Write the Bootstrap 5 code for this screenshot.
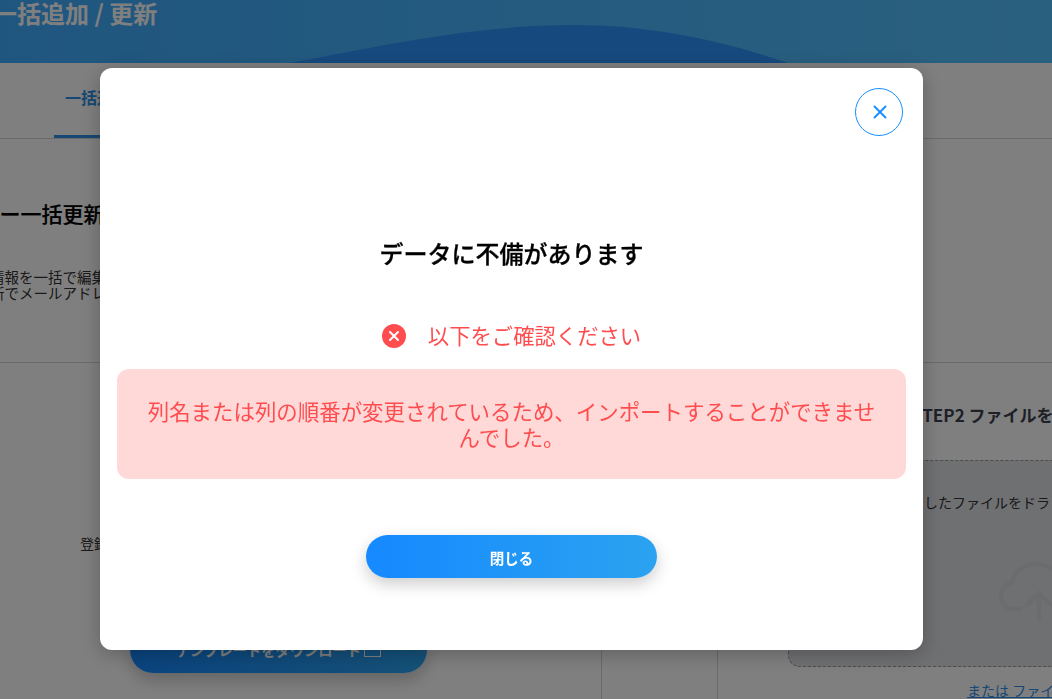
<!DOCTYPE html>
<html lang="ja">
<head>
<meta charset="utf-8">
<title>一括追加 / 更新</title>
<link href="https://cdn.jsdelivr.net/npm/bootstrap@5.3.0/dist/css/bootstrap.min.css" rel="stylesheet">
<style>
html,body{height:699px;overflow:hidden;}
body{font-family:"Noto Sans CJK JP","Noto Sans",sans-serif;background:#fff;color:#333;}
.page-head{height:63px;background:linear-gradient(90deg,#3facff,#55c0ff);overflow:hidden;position:relative;}
.page-head h1{font-size:24px;font-weight:700;color:#fff;margin:-4px 0 0 -31px;line-height:34px;white-space:nowrap;}
.head-wave{position:absolute;left:0;top:0;width:1052px;height:63px;}
.tab-row{height:76px;border-bottom:1px solid #d6d6d6;padding-left:54px;}
.tab-on{width:120px;height:75px;border-bottom:3px solid #2f8fe8;color:#2f8fe8;font-weight:700;font-size:16px;padding:22px 0 0 11px;white-space:nowrap;}
.intro{height:224px;border-bottom:1px solid #d6d6d6;overflow:hidden;padding-top:59px;}
.intro h2{font-size:21px;font-weight:500;-webkit-text-stroke:.2px #000;color:#000;margin:0 0 41px -63px;line-height:30px;white-space:nowrap;}
.intro p{font-size:14.5px;line-height:16px;color:#333;margin:0 0 0 -10px;white-space:nowrap;}
.steps{height:337px;}
.step-one{flex:none;width:602px;border-right:1px solid #d6d6d6;padding:170px 0 0 80px;font-size:14px;}
.step-mid{flex:none;width:116px;border-right:1px solid #d6d6d6;}
.step-two{flex:1 1 0;min-width:0;padding:40px 0 0 70px;white-space:nowrap;overflow:hidden;}
.step-two h3{font-size:17px;font-weight:700;margin:0 0 33px 124px;line-height:24px;color:#3d4250;}
.tpl-btn{width:297px;height:46px;margin:73px 0 0 50px;border:0;border-radius:23px;background:linear-gradient(90deg,#1589ff,#2ba3f0);color:#fff;font-weight:700;font-size:14.3px;box-shadow:0 8px 16px rgba(0,0,0,.2);}
.tpl-btn svg{margin-left:3px;vertical-align:-1px;}
.drop-box{width:400px;height:207px;border:1px dashed #999;border-radius:12px;background:#dfe0e5;padding-top:29px;font-size:14px;color:#333;position:relative;}
.drop-text{margin-left:135px;line-height:24px;}
.cloud{position:absolute;left:209px;top:100px;width:78px;height:60px;}
.or-link{font-size:14px;line-height:20px;margin:13px 0 0 179px;color:#2f8fe8;text-decoration:underline;display:block;}
.err-dialog{max-width:823px;width:823px;margin:68px 0 0 100px;}
.err-content{height:582px;border:0;border-radius:12px;box-shadow:0 4px 20px rgba(0,0,0,.25);padding:168px 17px 0;position:relative;}
.err-close{position:absolute;top:20px;right:20px;width:48px;height:48px;border-radius:50%;border:1px solid #1890ff;background:#fff;padding:0 0 0 1px;display:flex;align-items:center;justify-content:center;}
.err-title{font-size:24px;font-weight:500;-webkit-text-stroke:.3px #000;color:#000;line-height:34px;margin:0;}
.err-line{margin-top:48px;height:36px;color:#ff4d4f;font-size:21.33px;gap:22px;}
.err-line span{margin-top:-2px;}
.err-box{margin-top:15px;height:110px;background:#ffd8d8;border-radius:12px;color:#ff4d4f;font-size:21.45px;line-height:26px;padding:0 28px;}
.err-btn{display:block;width:291px;height:43px;margin:56px auto 0;padding-top:3px;border:0;border-radius:22px;background:linear-gradient(90deg,#1589ff,#2ba3f0);color:#fff;font-size:14.5px;font-weight:700;box-shadow:0 6px 16px rgba(0,0,0,.2);}
</style>
</head>
<body>
<header class="page-head">
  <svg class="head-wave" viewBox="0 0 1052 63" aria-hidden="true"><path d="M290 63C400 42 480 25 575 25C650 25 720 40 788 63Z" fill="#2c93fb"/></svg>
  <h1 class="position-relative">ー一括追加 / 更新</h1>
</header>
<div class="tab-row d-flex"><div class="tab-on">一括追加</div></div>
<section class="intro">
  <h2>ユーザー一括更新</h2>
  <p>情報を一括で編集</p>
  <p>新でメールアドレス</p>
</section>
<section class="steps d-flex">
  <div class="step-one">
    <div>登録</div>
    <button class="tpl-btn" type="button">テンプレートをダウンロード<svg width="17" height="12" viewBox="0 0 17 12" fill="none" stroke="#fff"><rect x=".5" y=".5" width="16" height="11"/></svg></button>
  </div>
  <div class="step-mid"></div>
  <div class="step-two">
    <h3>STEP2 ファイルを選択</h3>
    <div class="drop-box">
      <div class="drop-text">したファイルをドラッグ</div>
      <svg class="cloud" viewBox="0 0 78 60" fill="none" stroke="#d8d9dc" stroke-width="4.5" stroke-linecap="round" stroke-linejoin="round"><path d="M22 48H16C8 48 3 42 3 35C3 28 8 23 14 22C16 10 26 3 38 3C50 3 60 10 64 20"/><path d="M41 58V32M29 44L41 32L53 44"/></svg>
    </div>
    <a class="or-link" href="#">または ファイルを選択</a>
  </div>
</section>

<div class="modal-backdrop show"></div>
<div class="modal d-block" tabindex="-1">
  <div class="modal-dialog err-dialog">
    <div class="modal-content err-content text-center">
      <button class="err-close" type="button" aria-label="閉じる">
        <svg width="16" height="16" viewBox="0 0 16 16" fill="none" stroke="#1890ff" stroke-width="2" stroke-linecap="round"><path d="M2.5 2.5L13.5 13.5M13.5 2.5L2.5 13.5"/></svg>
      </button>
      <h2 class="err-title">データに不備があります</h2>
      <div class="err-line d-flex align-items-center justify-content-center">
        <svg width="24" height="24" viewBox="0 0 24 24"><circle cx="12" cy="12" r="12" fill="#ff4d4f"/><path d="M8 8L16 16M16 8L8 16" stroke="#fff" stroke-width="2" stroke-linecap="round"/></svg>
        <span>以下をご確認ください</span>
      </div>
      <div class="err-box d-flex align-items-center justify-content-center">列名または列の順番が変更されているため、インポートすることができませんでした。</div>
      <button class="err-btn" type="button">閉じる</button>
    </div>
  </div>
</div>
<script src="https://cdn.jsdelivr.net/npm/bootstrap@5.3.0/dist/js/bootstrap.bundle.min.js"></script>
</body>
</html>
